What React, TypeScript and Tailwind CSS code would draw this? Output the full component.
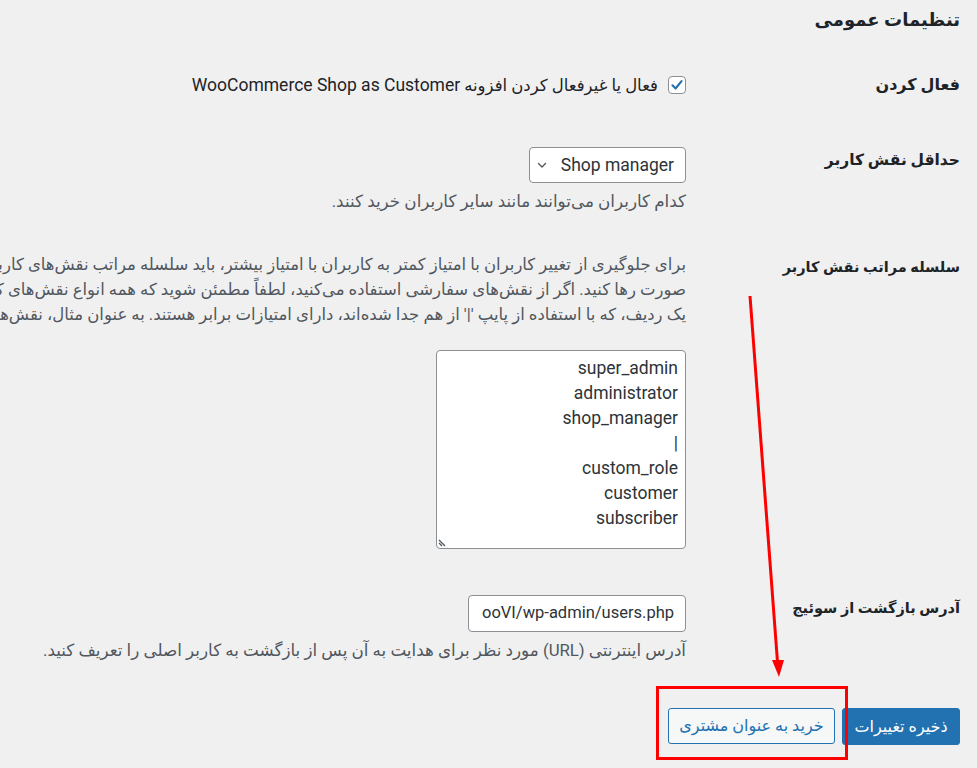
import React from "react";

const FONT = { fontFamily: 'Roboto, "DejaVu Sans", sans-serif' };

function Row({ label, labelCls = "", children, className = "" }: { label: string; labelCls?: string; children: React.ReactNode; className?: string }) {
  return (
    <div className={"flex flex-row items-start " + className}>
      <div className={"w-[274px] shrink-0 leading-[26px] font-semibold text-[#1d2327] " + labelCls}>{label}</div>
      <div className="flex-1 min-w-0">{children}</div>
    </div>
  );
}

export default function App() {
  const roles = ["super_admin", "administrator", "shop_manager", "|", "custom_role", "customer", "subscriber"];
  return (
    <div dir="rtl" style={FONT} className="relative w-[977px] h-[768px] overflow-hidden bg-[#f0f0f1] pr-[17px] text-[#1d2327]">
      <h2 className="pt-[6px] text-[18px] leading-[28px] font-bold text-[#1d2327]">تنظیمات عمومی</h2>

      {/* Row 1 */}
      <div className="mt-[38px] flex flex-row items-center h-[26px]">
        <div className="w-[274px] shrink-0 text-[16px] leading-[26px] font-semibold">فعال کردن</div>
        <div className="flex flex-row items-center gap-[10px]">
          <span className="flex items-center justify-center w-[18px] h-[18px] bg-white border border-[#8c8f94] rounded-[4px]">
            <svg width="14" height="14" viewBox="0 0 20 20">
              <path d="M3.5 10.5 L8 15 L16.5 4.5" fill="none" stroke="#2271b1" strokeWidth="3" strokeLinecap="round" strokeLinejoin="round" />
            </svg>
          </span>
          <span className="leading-[26px] text-[#1d2327] whitespace-nowrap">
            <span className="text-[16.5px]">فعال یا غیرفعال کردن افزونه</span>{" "}
            <span className="text-[17.5px]">WooCommerce Shop as Customer</span>
          </span>
        </div>
      </div>

      {/* Row 2 */}
      <Row label="حداقل نقش کاربر" labelCls="text-[15.5px]" className="mt-[49px]">
        <div className="flex flex-row">
          <div className="w-[157px] h-[36px] bg-white border border-[#8c8f94] rounded-[4px] flex flex-row items-center justify-between pr-[11px] pl-[5px]">
            <span className="text-[17.5px] text-[#2c3338]">Shop manager</span>
            <svg width="14" height="14" viewBox="0 0 20 20">
              <path d="M5 8 L10 13 L15 8" fill="none" stroke="#50575e" strokeWidth="2" strokeLinecap="round" strokeLinejoin="round" />
            </svg>
          </div>
        </div>
        <p className="mt-[6px] text-[16.75px] leading-[24px] text-[#50575e] whitespace-nowrap">کدام کاربران می‌توانند مانند سایر کاربران خرید کنند.</p>
      </Row>

      {/* Row 3 */}
      <Row label="سلسله مراتب نقش کاربر" labelCls="text-[14.5px] pt-[3px]" className="mt-[39px]">
        <div className="text-[16.5px] leading-[25px] text-[#50575e] whitespace-nowrap">
          <div>برای جلوگیری از تغییر کاربران با امتیاز کمتر به کاربران با امتیاز بیشتر، باید سلسله مراتب نقش‌های کاربری را به این صورت تنظیم کنید</div>
          <div>صورت رها کنید. اگر از نقش‌های سفارشی استفاده می‌کنید، لطفاً مطمئن شوید که همه انواع نقش‌های کاربری در این فهرست وجود دارند</div>
          <div>یک ردیف، که با استفاده از پایپ '|' از هم جدا شده‌اند، دارای امتیازات برابر هستند. به عنوان مثال، نقش‌های کاربری در یک ردیف</div>
        </div>
        <div className="relative mt-[23px] w-[250px] h-[199px] bg-white border border-[#8c8f94] rounded-[4px] pt-[5px] pr-[7px] text-[17.5px] leading-[25px] text-[#2c3338]">
          {roles.map((r) => (
            <div key={r}>{r}</div>
          ))}
          <svg className="absolute left-[1px] bottom-[1px]" width="10" height="10" viewBox="0 0 10 10">
            <path d="M1 3 L7 9 M1 6 L4 9" stroke="#50575e" strokeWidth="1.3" />
          </svg>
        </div>
      </Row>

      {/* Row 4 */}
      <Row label="آدرس بازگشت از سوئیج" labelCls="text-[14.5px] pt-[1px]" className="mt-[46px]">
        <div className="flex flex-row">
          <div className="w-[218px] h-[37px] bg-white border border-[#8c8f94] rounded-[4px] flex items-center pr-[11px] pl-[9px]">
            <div className="w-full overflow-hidden flex flex-row justify-start">
              <span dir="ltr" className="text-[16.5px] text-[#2c3338] whitespace-nowrap">ooVI/wp-admin/users.php</span>
            </div>
          </div>
        </div>
        <p className="mt-[6px] text-[16.75px] leading-[24px] text-[#50575e] whitespace-nowrap">آدرس اینترنتی (URL) مورد نظر برای هدایت به آن پس از بازگشت به کاربر اصلی را تعریف کنید.</p>
      </Row>

      {/* Buttons */}
      <div className="mt-[46px] flex flex-row gap-[7px]">
        <button className="w-[118px] h-[37px] rounded-[3px] bg-[#2271b1] border border-[#2271b1] text-white text-[16px] font-normal">ذخیره تغییرات</button>
        <button className="w-[167px] h-[36px] rounded-[3px] bg-[#f6f7f7] border border-[#2271b1] text-[#2271b1] text-[16px]">خرید به عنوان مشتری</button>
      </div>

      {/* Annotations */}
      <div className="absolute left-[656px] top-[686px] w-[192px] h-[74px] border-[3px] border-[#ff0000]" />
      <svg className="absolute left-0 top-0 pointer-events-none" width="977" height="768" viewBox="0 0 977 768">
        <line x1="750" y1="296" x2="777.5" y2="662" stroke="#ff0000" strokeWidth="3" />
        <polygon points="772,660 784,660 779,677" fill="#ff0000" />
      </svg>
    </div>
  );
}
